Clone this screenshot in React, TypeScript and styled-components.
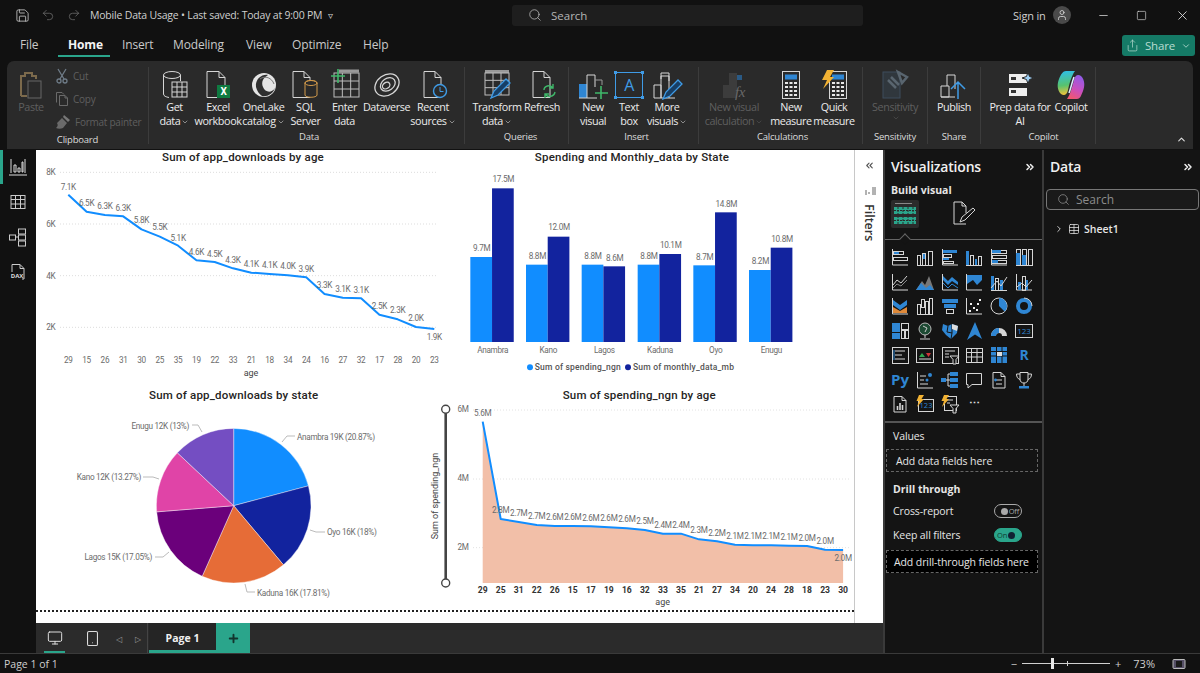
import React from 'react'
import styled, { createGlobalStyle } from 'styled-components'
import {
  ChevronDown,
  ChevronRight,
  ChevronsLeft,
  ChevronsRight,
  ChevronUp,
  Minus,
  Monitor,
  Plus,
  Redo2,
  Save,
  Search,
  Share,
  Smartphone,
  Square,
  Table,
  Undo2,
  User,
  X,
} from 'lucide-react'

const UI = '"Open Sans", "Noto Sans", "Liberation Sans", sans-serif'
const DIN = 'Roboto, "Liberation Sans", sans-serif'
const TEAL = '#2aa58b'
const BLUE = '#118DFF'
const NAVY = '#12239E'
const LINE = '#d6d6d6'
const ICON_BLUE = '#2f86d3'

const GlobalStyle = createGlobalStyle`
  html, body { margin: 0; padding: 0; background: #111; }
  body { font-family: ${UI}; color: #e6e6e6; overflow: hidden; }
`
const Page = styled.div`
  width: 1200px;
  height: 673px;
  display: flex;
  flex-direction: column;
  background: #111;
  overflow: hidden;
`
const TitleBar = styled.div`
  height: 30px;
  display: flex;
  align-items: center;
  padding-left: 15px;
  font-size: 10.5px;
  letter-spacing: -0.2px;
  color: #cfcfcf;
  & > * {
    flex-shrink: 0;
  }
`
const TitleIcon = styled.span<{ $w: number; $dim?: boolean }>`
  width: ${p => p.$w}px;
  display: flex;
  color: ${p => (p.$dim ? '#6f6f6f' : '#ccc')};
`
const DocName = styled.span`
  white-space: nowrap;
  width: 248px;
`
const DocCaret = styled.span`
  margin-left: 6px;
  font-size: 10px;
`
const SearchBar = styled.div`
  margin-left: 174px;
  width: 351px;
  height: 21px;
  background: #1e1e1e;
  border-radius: 3px;
  display: flex;
  align-items: center;
  gap: 9px;
  padding-left: 16px;
  box-sizing: border-box;
  font-size: 11.5px;
  letter-spacing: 0;
  color: #b5b5b5;
`
const SignIn = styled.span`
  margin-left: 150px;
  width: 40px;
  font-size: 11px;
  letter-spacing: -0.2px;
`
const Avatar = styled.span`
  width: 18px;
  height: 18px;
  border-radius: 50%;
  background: #4a4a4a;
  display: flex;
  align-items: center;
  justify-content: center;
  margin-right: 26px;
  color: #ddd;
`
const WinBtn = styled.span`
  width: 39px;
  display: flex;
  color: #ddd;
`
const MenuRow = styled.div`
  height: 31px;
  display: flex;
  align-items: center;
  padding-left: 20px;
  font-size: 12px;
  letter-spacing: -0.15px;
  color: #c9c9c9;
`
const MenuTab = styled.div<{ $w: number; $active?: boolean }>`
  width: ${p => p.$w}px;
  height: 100%;
  line-height: 29px;
  position: relative;
  font-weight: ${p => (p.$active ? 700 : 400)};
  color: ${p => (p.$active ? '#f4f4f4' : '#c9c9c9')};
  ${p =>
    p.$active &&
    `&::after {
      content: '';
      position: absolute;
      left: -10px;
      width: 52px;
      bottom: 4px;
      height: 2px;
      background: ${TEAL};
    }`}
`
const ShareBtn = styled.div`
  margin-left: auto;
  margin-right: 5px;
  width: 73px;
  height: 21px;
  background: #157a66;
  border-radius: 3px;
  display: flex;
  align-items: center;
  justify-content: center;
  gap: 6px;
  font-size: 11.5px;
  color: #b9dcd2;
`
const Ribbon = styled.div`
  height: 88px;
  margin: 0 7px;
  background: #2a2a2a;
  border-radius: 7px 7px 0 0;
  display: flex;
  position: relative;
  flex-shrink: 0;
`
const Group = styled.div<{ $w: number; $pad?: number; $last?: boolean }>`
  width: ${p => p.$w}px;
  box-sizing: border-box;
  border-right: ${p => (p.$last ? 'none' : '1px solid #3c3c3c')};
  margin: 6px 0 5px;
  padding-left: ${p => p.$pad ?? 0}px;
  display: flex;
  flex-direction: column;
`
const GroupRow = styled.div`
  display: flex;
  height: 65px;
  margin-top: 2px;
`
const GroupName = styled.div`
  text-align: center;
  font-size: 9.5px;
  letter-spacing: -0.2px;
  line-height: 14px;
  color: #dcdcdc;
`
const RibbonBtn = styled.div<{ $w: number; $off?: boolean }>`
  width: ${p => p.$w}px;
  display: flex;
  flex-direction: column;
  align-items: center;
  font-size: 10.8px;
  line-height: 14px;
  letter-spacing: -0.4px;
  white-space: nowrap;
  color: ${p => (p.$off ? '#5f5f5f' : '#ececec')};
`
const BtnIcon = styled.div`
  height: 31px;
  display: flex;
  align-items: flex-start;
  flex-shrink: 0;
`
const Caret = styled.span`
  display: inline-flex;
  vertical-align: -1px;
  margin-left: 1px;
`
const ClipStack = styled.div`
  display: flex;
  flex-direction: column;
  margin-top: -5px;
  font-size: 10px;
  letter-spacing: -0.25px;
  color: #5f5f5f;
`
const ClipRow = styled.div`
  height: 23px;
  display: flex;
  align-items: center;
  gap: 4px;
  white-space: nowrap;
`
const Collapse = styled.span`
  position: absolute;
  right: 6px;
  bottom: 4px;
  display: flex;
  color: #ddd;
`
const Body = styled.div`
  flex: 1;
  display: flex;
  margin-top: 1px;
  min-height: 0;
`
const Rail = styled.div`
  width: 36px;
  position: relative;
  display: flex;
  flex-direction: column;
  align-items: center;
  gap: 15px;
  padding-top: 7px;
  box-sizing: border-box;
  flex-shrink: 0;
`
const RailMark = styled.span`
  position: absolute;
  left: 0;
  top: 0;
  width: 3px;
  height: 34px;
  background: ${TEAL};
`
const Center = styled.div`
  width: 847px;
  display: flex;
  flex-direction: column;
`
const CanvasArea = styled.div`
  height: 473px;
  display: flex;
`
const Canvas = styled.div`
  width: 819px;
  background: #fff;
  border-right: 1px solid #c8c8c8;
  box-sizing: border-box;
  overflow: hidden;
`
const ChartRow = styled.div`
  display: flex;
  height: 230px;
`
const ChartSvg = styled.svg`
  display: block;
  flex-shrink: 0;
`
const PageEnd = styled.div`
  border-top: 2px dotted #222;
`
const ChartTitle = styled.text`
  font-family: ${DIN};
  font-size: 11.5px;
  font-weight: 500;
  letter-spacing: 0.2px;
  fill: #252423;
  text-anchor: middle;
  dominant-baseline: central;
`
const Tick = styled.text<{ $strong?: boolean; $anchor?: string }>`
  font-family: ${DIN};
  font-size: ${p => (p.$strong ? 8.6 : 8.2)}px;
  font-weight: ${p => (p.$strong ? 700 : 400)};
  letter-spacing: ${p => (p.$strong ? 0 : -0.3)}px;
  fill: ${p => (p.$strong ? '#333' : '#6c6c6c')};
  text-anchor: ${p => p.$anchor ?? 'middle'};
  dominant-baseline: central;
`
const AxisName = styled.text`
  font-family: ${DIN};
  font-size: 9px;
  fill: #444;
  text-anchor: middle;
  dominant-baseline: central;
`
const LegendText = styled.text`
  font-family: ${DIN};
  font-size: 8.5px;
  font-weight: 500;
  letter-spacing: 0.2px;
  fill: #555;
  dominant-baseline: central;
`
const Filters = styled.div`
  width: 28px;
  background: #fff;
  color: #252423;
  display: flex;
  flex-direction: column;
  align-items: center;
  padding-top: 10px;
  box-sizing: border-box;
`
const FilterMark = styled.span`
  display: flex;
  margin: 14px 0 0 2px;
`
const FiltersLabel = styled.div`
  writing-mode: vertical-rl;
  font-size: 12.5px;
  font-weight: 600;
  margin: 7px 0 0 1px;
  color: #333;
`
const PageBar = styled.div`
  flex: 1;
  background: #2b2b2b;
  display: flex;
`
const DeviceGroup = styled.div`
  width: 112px;
  display: flex;
  align-items: center;
  border-right: 1px solid #444;
  box-sizing: border-box;
  padding-left: 8px;
`
const DeviceBtn = styled.span<{ $on?: boolean; $w: number; $ml?: number }>`
  width: ${p => p.$w}px;
  margin-left: ${p => p.$ml ?? 0}px;
  display: flex;
  justify-content: center;
  position: relative;
  padding: 4px 0;
  color: #ddd;
  ${p =>
    p.$on &&
    `&::after {
      content: '';
      position: absolute;
      left: 0;
      right: 0;
      bottom: -3px;
      height: 2px;
      background: ${TEAL};
    }`}
`
const ArrowPair = styled.span`
  display: flex;
  margin-left: 7px;
`
const Arrow = styled.span`
  width: 19px;
  display: flex;
  justify-content: center;
  color: #999;
  font-size: 8px;
`
const PageTab = styled.div`
  width: 67px;
  margin-left: 1px;
  padding-top: 3px;
  box-sizing: border-box;
  border-bottom: 3px solid ${TEAL};
  background: #252525;
  display: flex;
  align-items: center;
  justify-content: center;
  font-size: 10.5px;
  font-weight: 700;
  color: #f0f0f0;
`
const AddTab = styled.div`
  width: 34px;
  background: ${TEAL};
  display: flex;
  align-items: center;
  justify-content: center;
  color: #12352d;
`
const Pane = styled.div<{ $w: number }>`
  width: ${p => p.$w}px;
  background: #141414;
  border-left: 2px solid #3a3a3a;
  box-sizing: border-box;
  display: flex;
  flex-direction: column;
  position: relative;
  flex-shrink: 0;
`
const PaneHead = styled.div<{ $pad: number }>`
  height: 33px;
  padding: 0 6px 0 ${p => p.$pad}px;
  display: flex;
  align-items: center;
  justify-content: space-between;
  font-size: 14px;
  font-weight: 600;
  letter-spacing: -0.2px;
  color: #f0f0f0;
`
const BuildLabel = styled.div`
  font-size: 10.5px;
  font-weight: 700;
  padding-left: 6px;
  line-height: 14px;
`
const BuildTabs = styled.div`
  height: 39px;
  margin-top: 3px;
  padding-left: 6px;
  display: flex;
  gap: 33px;
  border-bottom: 1px solid #666;
  position: relative;
`
const Notch = styled.span`
  position: absolute;
  left: 16px;
  bottom: -4px;
  width: 7px;
  height: 7px;
  background: #141414;
  border-left: 1px solid #666;
  border-top: 1px solid #666;
  transform: rotate(45deg);
`
const ActiveTab = styled.div`
  width: 28px;
  height: 28px;
  background: #2b2b2b;
  border-radius: 2px;
  display: flex;
  align-items: center;
  justify-content: center;
`
const VizGrid = styled.div`
  display: grid;
  grid-template-columns: repeat(6, 24.7px);
  grid-auto-rows: 24.5px;
  padding: 5px 0 0 3px;
  height: 176px;
  border-bottom: 2px solid #555;
  place-items: center;
`
const Well = styled.div`
  font-size: 10.5px;
  padding-left: 8px;
  margin-top: 6px;
  line-height: 14px;
  letter-spacing: -0.1px;
`
const Drop = styled.div<{ $dark?: boolean; $pad: number }>`
  margin: ${p => (p.$dark ? 3 : 6)}px 4px 0 1px;
  height: 23px;
  border: 1px dashed #666;
  box-sizing: border-box;
  background: ${p => (p.$dark ? '#000' : 'transparent')};
  display: flex;
  align-items: center;
  padding-left: ${p => p.$pad}px;
  font-size: 10.5px;
  letter-spacing: -0.1px;
  white-space: nowrap;
`
const DrillHead = styled.div`
  font-size: 10.5px;
  font-weight: 700;
  padding-left: 8px;
  margin: 10px 0 3px;
  line-height: 14px;
`
const ToggleRow = styled.div`
  height: 24px;
  display: flex;
  align-items: center;
  justify-content: space-between;
  padding: 0 20px 0 8px;
  font-size: 10.5px;
  letter-spacing: -0.1px;
`
const Toggle = styled.span<{ $on?: boolean }>`
  width: 28px;
  height: 14px;
  border-radius: 7px;
  box-sizing: border-box;
  border: 1px solid ${p => (p.$on ? TEAL : '#aaa')};
  background: ${p => (p.$on ? TEAL : 'transparent')};
  display: flex;
  flex-direction: ${p => (p.$on ? 'row-reverse' : 'row')};
  align-items: center;
  justify-content: flex-end;
  gap: 1px;
  padding: 0 2px;
  font-size: 7.5px;
  letter-spacing: -0.2px;
  color: ${p => (p.$on ? '#0e3b32' : '#aaa')};
  &::before {
    content: '';
    width: 7px;
    height: 7px;
    border-radius: 50%;
    background: ${p => (p.$on ? '#123' : '#aaa')};
    flex-shrink: 0;
  }
`
const SearchInput = styled.div`
  margin: 6px 1px 0 2px;
  height: 21px;
  border: 1px solid #777;
  border-radius: 4px;
  background: #1a1a1a;
  box-sizing: border-box;
  display: flex;
  align-items: center;
  gap: 6px;
  padding-left: 10px;
  font-size: 12px;
  color: #8c8c8c;
`
const TreeRow = styled.div`
  display: flex;
  align-items: center;
  gap: 4px;
  padding-left: 10px;
  margin-top: 12px;
  font-size: 10.5px;
  font-weight: 600;
`
const StatusBar = styled.div`
  height: 20px;
  border-top: 1px solid #3a3a3a;
  box-sizing: border-box;
  display: flex;
  align-items: center;
  padding-left: 4px;
  font-size: 10.5px;
  color: #cfcfcf;
  flex-shrink: 0;
`
const ZoomBox = styled.div`
  margin-left: auto;
  display: flex;
  align-items: center;
  padding-right: 14px;
  gap: 5px;
  font-size: 11px;
`
const ZoomTrack = styled.div`
  width: 88px;
  height: 1px;
  background: #d0d0d0;
  position: relative;
`
const ZoomThumb = styled.span`
  position: absolute;
  left: 29px;
  top: -5px;
  width: 3px;
  height: 11px;
  background: #e8e8e8;
`
const ZoomMark = styled.span`
  position: absolute;
  left: 45px;
  top: -2px;
  width: 1px;
  height: 5px;
  background: #d0d0d0;
`
const ZoomValue = styled.span`
  margin: 0 12px 0 7px;
`

// ribbon icons, all drawn on a 32 box
const Doc = ({ c = LINE }: { c?: string }) => (
  <path d="M7 2.5H18L24 8.5V28.5H7ZM18 2.5V8.5H24" stroke={c} fill="none" />
)
const Grid = ({ x, y, w, h, c = LINE, bg = '#2a2a2a' }: { x: number; y: number; w: number; h: number; c?: string; bg?: string }) => (
  <g stroke={c} fill={bg}>
    <rect x={x} y={y} width={w} height={h} />
    <path d={`M${x} ${y + h / 3}H${x + w}M${x} ${y + (2 * h) / 3}H${x + w}M${x + w / 3} ${y}V${y + h}M${x + (2 * w) / 3} ${y}V${y + h}`} fill="none" />
  </g>
)
const Pencil = ({ dx = 0, dy = 0 }: { dx?: number; dy?: number }) => (
  <g transform={`translate(${dx} ${dy})`}>
    <path d="M5 27L8 20L20 8L24 12L12 24Z" fill="#173f66" stroke="#3f9be6" strokeWidth="1.3" />
  </g>
)
const Bars = ({ c = LINE }: { c?: string }) => (
  <path d="M3 29V16H10V29M10 29V7H18V29M3 29H24" stroke={c} fill="none" />
)
const Calc = ({ x = 9 }: { x?: number }) => (
  <g transform={`translate(${x} 2)`}>
    <rect x="0.5" y="0.5" width="17" height="27" fill="none" stroke={LINE} />
    <rect x="3" y="3.5" width="12" height="5" fill="#2f86d3" />
    <path d="M3 12h3M7.5 12h3M12 12h3M3 16h3M7.5 16h3M12 16h3M3 20h3M7.5 20h3M12 20h3M3 24h3M7.5 24h3M12 24h3" stroke="#e8e8e8" strokeWidth="2.2" />
  </g>
)
const Ic = ({ w = 32, children }: { w?: number; children: React.ReactNode }) => (
  <svg width={w} height="32" viewBox={`0 0 ${w} 32`} fill="none">
    {children}
  </svg>
)

const PasteIcon = () => (
  <Ic>
    <path d="M6 27V7H10V4H17V7H21V10" stroke="#7c6a4c" strokeWidth="2" fill="none" />
    <path d="M6 27H12" stroke="#7c6a4c" strokeWidth="2" />
    <rect x="13" y="12" width="13" height="17" stroke="#666" fill="#2a2a2a" />
  </Ic>
)
const CutIcon = () => (
  <svg width="14" height="16" viewBox="0 0 14 16" fill="none" stroke="#6f7c88" strokeWidth="1.3">
    <path d="M3 1L9 11M11 1L5 11" />
    <circle cx="4" cy="13" r="2" />
    <circle cx="10" cy="13" r="2" />
  </svg>
)
const CopyIcon = () => (
  <svg width="14" height="16" viewBox="0 0 14 16" fill="none" stroke="#6a6a6a">
    <path d="M1.5 11.5V1.5H7L9 3.5" />
    <path d="M4.5 4.5H10L12.5 7V14.5H4.5ZM10 4.5V7H12.5" />
  </svg>
)
const PainterIcon = () => (
  <svg width="16" height="16" viewBox="0 0 16 16">
    <path d="M9 1L15 6L13 8L8 3Z" fill="#777" />
    <path d="M7 4L12 9L8 14C6 15 3 15 1 14C3 12 3 11 2 9Z" fill="#6a6a6a" />
  </svg>
)
const GetDataIcon = () => (
  <Ic>
    <ellipse cx="13" cy="6" rx="8.5" ry="3.5" stroke={LINE} />
    <path d="M4.5 6V25C4.5 27 7 28 10 28.5M21.5 6V12" stroke={LINE} />
    <Grid x={13} y={13} w={15} h={15} />
  </Ic>
)
const ExcelIcon = () => (
  <Ic>
    <path d="M5 2.5H17L23 8.5V28.5H5ZM17 2.5V8.5H23" stroke={LINE} />
    <rect x="15" y="16" width="13" height="13" fill="#0f7b41" />
    <text x="21.5" y="26" textAnchor="middle" fontSize="10" fontWeight="700" fill="#fff" fontFamily={DIN}>X</text>
  </Ic>
)
const OneLakeIcon = () => (
  <Ic>
    <circle cx="16" cy="16" r="12" fill="#e4e4e4" />
    <path d="M8 18C7 10 14 5 20 6C15 9 13 13 15 18C17 23 23 25 27 19C25 25 19 28 14 27C11 25 9 22 8 18Z" fill="#2f2f2f" />
    <path d="M12 10C17 6 24 9 26 15" stroke="#777" />
  </Ic>
)
const SqlIcon = () => (
  <Ic>
    <path d="M3 2.5H14L20 8.5V28.5H3ZM14 2.5V8.5H20" stroke={LINE} />
    <ellipse cx="21" cy="14" rx="6" ry="2.5" fill="#2a2a2a" stroke="#d29a4b" />
    <path d="M15 14V26C15 29 27 29 27 26V14" fill="#2a2a2a" stroke="#d29a4b" />
    <ellipse cx="21" cy="14" rx="6" ry="2.5" stroke="#d29a4b" />
  </Ic>
)
const EnterIcon = () => (
  <Ic>
    <path d="M10 2H30" stroke="#999" strokeWidth="3" />
    <Grid x={5} y={4} w={25} h={24} c="#bdbdbd" />
    <path d="M9 0V14M2 7H16" stroke="#3fb86a" strokeWidth="1.6" />
  </Ic>
)
const DataverseIcon = () => (
  <Ic>
    <g stroke={LINE} strokeWidth="1.3" transform="rotate(-35 16 16)">
      <ellipse cx="16" cy="16" rx="13" ry="10" />
      <ellipse cx="17" cy="16" rx="8" ry="6" />
      <ellipse cx="15" cy="16" rx="4" ry="3" />
    </g>
  </Ic>
)
const RecentIcon = () => (
  <Ic>
    <Doc />
    <circle cx="23" cy="22" r="6.5" fill="#2a2a2a" stroke="#3f9be6" strokeWidth="1.4" />
    <path d="M23 18V22.5H26.5" stroke="#3f9be6" />
  </Ic>
)
const TransformIcon = () => (
  <Ic>
    <path d="M4 2.5H28" stroke="#999" strokeWidth="3" />
    <Grid x={4} y={4} w={24} h={22} c="#bdbdbd" />
    <Pencil dx={5} dy={2} />
  </Ic>
)
const RefreshIcon = () => (
  <Ic>
    <Doc />
    <path d="M18 21C18 17 24 15 27 19M27 15V19H23M29 23C28 28 22 29 19 25M19 29V25H23" stroke="#3fb86a" strokeWidth="1.4" />
  </Ic>
)
const NewVisualIcon = () => (
  <Ic>
    <rect x="2" y="15" width="8" height="14" fill="#2f86d3" />
    <path d="M10 29V6H18V18M2 29H20" stroke={LINE} />
    <path d="M18 11H25V16" stroke="#999" />
    <path d="M24 17V30M18 24H31" stroke="#3fb86a" strokeWidth="1.6" />
  </Ic>
)
const TextBoxIcon = () => (
  <Ic>
    <rect x="2.5" y="3.5" width="27" height="25" stroke="#3f9be6" />
    <path d="M1 2h3v3h-3zM28 2h3v3h-3zM1 27h3v3h-3zM28 27h3v3h-3z" fill="#3f9be6" />
    <text x="16" y="22" textAnchor="middle" fontSize="16" fill="#3f9be6" fontFamily={UI}>A</text>
  </Ic>
)
const MoreIcon = () => (
  <Ic>
    <Bars />
    <path d="M18 12V4H10V10" stroke={LINE} />
    <Pencil dx={7} dy={3} />
  </Ic>
)
const CalcVisualIcon = () => (
  <Ic>
    <path d="M5 16H11V29H5ZM11 4H19V29H11Z" fill="#3c3c3c" />
    <path d="M19 6H24V11H19Z" fill="#2a5a85" />
    <text x="22" y="28" textAnchor="middle" fontSize="15" fontStyle="italic" fill="#686868" fontFamily="Liberation Serif">fx</text>
  </Ic>
)
const MeasureIcon = () => (
  <Ic>
    <Calc x={7} />
  </Ic>
)
const QuickIcon = () => (
  <Ic>
    <Calc x={11} />
    <path d="M9 1H16L12 8H16L5 20L9 11H4Z" fill="#f2b233" />
  </Ic>
)
const SensIcon = () => (
  <Ic>
    <rect x="4" y="3" width="17" height="26" stroke="#3c4c5c" fill="#30373d" />
    <path d="M9 11L17 19M12 8L20 16M19 3L28 8L23 14Z" stroke="#59656f" strokeWidth="2.5" />
  </Ic>
)
const PublishIcon = () => (
  <Ic>
    <path d="M3 28V17H11V28H3M9 17V6H17V20M3 28H17" stroke={LINE} />
    <path d="M20 30V13M13 20L20 13L27 20" stroke="#3f9be6" strokeWidth="1.5" />
  </Ic>
)
const PrepIcon = () => (
  <Ic>
    <rect x="5" y="5" width="18" height="9" fill="#eee" />
    <rect x="5" y="19" width="18" height="8" fill="#eee" />
    <rect x="7" y="8" width="5" height="3" fill="#333" />
    <rect x="7" y="21" width="5" height="3" fill="#333" />
    <path d="M24 3L25.5 7.5L30 9L25.5 10.5L24 15L22.5 10.5L18 9L22.5 7.5Z" fill="#9ed0f5" stroke="#2a2a2a" />
  </Ic>
)
const CopilotIcon = () => (
  <Ic>
    <defs>
      <linearGradient id="cpA" x1="0.3" y1="0" x2="0.4" y2="1">
        <stop offset="0" stopColor="#2fc0e8" />
        <stop offset="0.6" stopColor="#57c26e" />
        <stop offset="1" stopColor="#f5c23a" />
      </linearGradient>
      <linearGradient id="cpB" x1="0.7" y1="0" x2="0.3" y2="1">
        <stop offset="0" stopColor="#8f5be8" />
        <stop offset="0.55" stopColor="#c94fc0" />
        <stop offset="1" stopColor="#f0566f" />
      </linearGradient>
    </defs>
    <path d="M11 2H20C17 6 15 12 13 21C12 26 9 27 6 25C2 21 2 15 4 10C6 5 8 2 11 2Z" fill="url(#cpA)" />
    <path d="M22 30H12C15 26 17 19 19 11C20 6 23 5 26 7C30 11 30 17 28 22C26 27 25 30 22 30Z" fill="url(#cpB)" />
    <path d="M19 8C17 13 16 19 14 24" stroke="#dcecff" strokeWidth="1.5" />
  </Ic>
)

// visualization gallery, each on a 20 box
const O = ({ x, y, w, h }: { x: number; y: number; w: number; h: number }) => (
  <rect x={x + 0.5} y={y + 0.5} width={w} height={h} stroke={LINE} fill="none" />
)
const B = ({ x, y, w, h }: { x: number; y: number; w: number; h: number }) => (
  <rect x={x} y={y} width={w} height={h} fill={ICON_BLUE} />
)
const Base = () => <path d="M2.5 2V18H18" stroke={LINE} />
const Under = () => <path d="M2 18.5H18" stroke={LINE} />
const Label = ({ x, y, size, children, c = ICON_BLUE, weight = 600 }: { x: number; y: number; size: number; children: string; c?: string; weight?: number }) => (
  <text x={x} y={y} textAnchor="middle" fontSize={size} fontWeight={weight} fill={c} fontFamily={UI}>
    {children}
  </text>
)
const Bolt = () => <path d="M4 1H9L6.5 5H9L2 13L4 7H1.5Z" fill="#f2b233" />

const vizIcons: React.ReactNode[] = [
  <><Base /><B x={3} y={4} w={6} h={3} /><O x={3} y={4} w={10} h={3} /><O x={3} y={10} w={14} h={3} /></>,
  <><Under /><O x={2} y={8} w={3} h={10} /><B x={7} y={6} w={4} h={6} /><O x={7} y={6} w={3} h={12} /><O x={13} y={4} w={4} h={14} /></>,
  <><Base /><B x={3} y={3} w={14} h={3} /><O x={3} y={7} w={8} h={3} /><B x={3} y={11} w={6} h={2} /><O x={3} y={14} w={10} h={2} /></>,
  <><Under /><B x={2} y={4} w={3} h={14} /><O x={6} y={8} w={3} h={10} /><B x={11} y={12} w={2} h={6} /><O x={14} y={9} w={3} h={9} /></>,
  <><Base /><O x={3} y={3} w={14} h={3} /><B x={3} y={3} w={9} h={3} /><O x={3} y={8} w={14} h={3} /><O x={3} y={13} w={14} h={3} /><B x={3} y={13} w={6} h={3} /></>,
  <><Under /><O x={2} y={2} w={4} h={16} /><B x={2} y={6} w={4} h={12} /><O x={8} y={2} w={4} h={16} /><B x={8} y={8} w={4} h={10} /><O x={14} y={2} w={4} h={16} /></>,
  <><Base /><path d="M3 13L7 8L11 11L17 4" stroke={LINE} /><path d="M3 16L7 12L11 14L17 8" stroke="#888" /></>,
  <><path d="M1 18L7 9L10 13L14 4L19 18Z" fill="#777" /><path d="M1 18L6 11L11 16L15 13L19 18Z" fill={ICON_BLUE} /></>,
  <><Base /><path d="M3 4L8 9L12 5L18 10V13L12 9L8 13L3 8Z" fill={ICON_BLUE} /><path d="M3 11L8 16L12 12L18 16" stroke={ICON_BLUE} /></>,
  <><Base /><path d="M3 3H18V8L13 13L9 8L3 12Z" fill={ICON_BLUE} /></>,
  <><Under /><B x={2} y={4} w={3} h={14} /><O x={6} y={6} w={3} h={12} /><B x={11} y={8} w={3} h={10} /><path d="M2 16L8 9L12 14L18 5" stroke={LINE} /></>,
  <><Base /><B x={4} y={10} w={3} h={8} /><O x={8} y={4} w={3} h={14} /><B x={12} y={8} w={2} h={10} /><path d="M3 15L8 11L12 15L18 8" stroke={LINE} /></>,
  <><Base /><path d="M3 4L10 9L17 4V9L10 14L3 9Z" fill={ICON_BLUE} /><path d="M3 11L10 15L17 11V17H3Z" fill="#e08a3a" /></>,
  <><Under /><O x={2} y={8} w={3} h={10} /><O x={6} y={3} w={3} h={8} /><O x={10} y={5} w={3} h={13} /><O x={14} y={2} w={3} h={16} /></>,
  <><B x={2} y={3} w={16} h={4} /><B x={4} y={8} w={12} h={4} /><O x={6} y={13} w={7} h={4} /></>,
  <><Base /><path d="M5 15h2M9 12h2M13 8h2M6 8h2M12 14h2M15 4h2" stroke="#f0f0f0" strokeWidth="2" /></>,
  <><circle cx="10" cy="10" r="8" stroke={LINE} /><path d="M10 10V2A8 8 0 0 1 15.6 15.6Z" fill={ICON_BLUE} /></>,
  <><circle cx="10" cy="10" r="6" stroke={ICON_BLUE} strokeWidth="4" /><path d="M10 2A8 8 0 0 1 18 10" stroke="#cfcfcf" /></>,
  <><B x={2} y={2} w={8} h={9} /><B x={2} y={12} w={8} h={6} /><O x={11} y={2} w={7} h={6} /><O x={11} y={9} w={3} h={8} /><O x={15} y={9} w={3} h={8} /></>,
  <><circle cx="10" cy="8" r="6" stroke="#bbb" fill="#1d4a33" /><path d="M10 14V17M5 18H15M8 5L12 7L10 11" stroke="#ccc" /></>,
  <><path d="M3 3L8 5L12 3L18 5L17 12L11 18L6 14L2 9Z" fill={ICON_BLUE} /><path d="M8 5L7 11L12 12L11 18M12 3L12 12" stroke="#141414" /><path d="M12 3L18 5L17 10L12 8Z" fill="#ddd" /></>,
  <><path d="M11 1L18 18L11 13.5L3 19Z" fill={ICON_BLUE} /></>,
  <><path d="M2 15A8 8 0 0 1 18 15H13A3 3 0 0 0 7 15Z" fill={LINE} /><path d="M2 15A8 8 0 0 1 10 7V12A3 3 0 0 0 7 15Z" fill={ICON_BLUE} /></>,
  <><O x={1} y={3} w={17} h={13} /><Label x={10} y={13} size={8} weight={400}>123</Label></>,
  <><O x={2} y={2} w={16} h={16} /><path d="M5 6H15M5 10H12M5 14H15" stroke={LINE} /><path d="M4 5V15" stroke={ICON_BLUE} /></>,
  <><O x={1} y={3} w={17} h={14} /><path d="M4 12L7 8L10 12Z" fill="#2fa84f" /><path d="M11 8L16 8L13.5 12Z" fill="#d13438" /><path d="M4 14H16" stroke={LINE} /></>,
  <><O x={2} y={2} w={16} h={16} /><path d="M5 6H15M5 9H9M5 12H9" stroke={LINE} /><path d="M10 11H19L16 14.5V19H13V14.5Z" fill="#141414" stroke={LINE} /></>,
  <><O x={2} y={3} w={16} h={14} /><path d="M2 7.5H18M2 12H18M7.5 3V17M13 3V17" stroke={LINE} /></>,
  <><rect x="2" y="2" width="16" height="16" fill={ICON_BLUE} /><path d="M2 6.5H18M2 11H18M7.5 2V18M13 2V18" stroke="#141414" /><rect x="8" y="7" width="5" height="4" fill="#ddd" /></>,
  <Label x={10} y={15} size={14} weight={700}>R</Label>,
  <Label x={10} y={15} size={15} weight={700}>Py</Label>,
  <><Base /><path d="M5 6H11M5 10H9M5 14H13" stroke={LINE} /><circle cx="15" cy="5" r="2" fill={ICON_BLUE} /><circle cx="12" cy="10" r="1.5" fill={ICON_BLUE} /></>,
  <><B x={1} y={8} w={5} h={4} /><B x={10} y={2} w={8} h={4} /><B x={10} y={8} w={8} h={4} /><B x={10} y={14} w={8} h={4} /><path d="M6 10H10M8 4V16H10M8 4H10" stroke={LINE} /></>,
  <><path d="M2.5 3.5H17.5V14.5H8L4 18V14.5H2.5Z" stroke={LINE} /></>,
  <><path d="M4 2.5H12L16 6.5V18H4ZM12 2.5V6.5H16" stroke={LINE} /><path d="M7 10H13M7 14H13" stroke={LINE} /><circle cx="6.5" cy="10" r="1.4" fill={ICON_BLUE} /></>,
  <><path d="M6 2.5H14V9C14 12 12 13 10 13C8 13 6 12 6 9Z" stroke={LINE} /><path d="M6 4H2.5C2.5 7 4 9 6 9.5M14 4H17.5C17.5 7 16 9 14 9.5M10 13V16" stroke={LINE} /><rect x="5" y="16" width="10" height="2.5" fill={ICON_BLUE} /></>,
  <><path d="M4 2.5H12L16 6.5V18H4ZM12 2.5V6.5H16" stroke={LINE} /><path d="M7.5 16V12M10 16V9M12.5 16V11" stroke={LINE} strokeWidth="1.6" /></>,
  <><O x={3} y={5} w={15} h={12} /><Label x={11} y={14} size={7.5} weight={400}>123</Label><Bolt /></>,
  <><O x={4} y={2} w={12} h={14} /><path d="M7 6H13M7 9H10" stroke={LINE} /><path d="M10 11H19L16 14.5V19H13V14.5Z" fill="#141414" stroke={LINE} /><Bolt /></>,
  <Label x={10} y={13} size={11} c="#ddd">⋯</Label>,
]

// chart data, read off the picture in page coordinates
const ages1 = '29 15 26 31 30 25 35 19 22 33 21 18 34 24 16 27 32 17 28 20 23'.split(' ')
const line1: [string, number, number][] = [
  ['7.1K', 134, 110], ['6.5K', 185, 158], ['6.3K', 195, 168], ['6.3K', 199, 173], ['5.8K', 238, 211], ['5.5K', 260, 232],
  ['5.1K', 287, 264], ['4.6K', 331, 306], ['4.5K', 336, 311], ['4.3K', 355, 330], ['4.1K', 368, 341], ['4.1K', 372, 346],
  ['4.0K', 376, 349], ['3.9K', 382, 356], ['3.3K', 432, 406], ['3.1K', 443, 417], ['3.1K', 445, 420], ['2.5K', 494, 467],
  ['2.3K', 508, 480], ['2.0K', 531, 504], ['1.9K', 537, 562],
]
const ages2 = '29 25 31 22 26 15 17 19 16 32 33 35 21 27 34 20 24 28 18 23 30'.split(' ')
const line2: [string, number, number][] = [
  ['5.6M', 125, 100], ['2.8M', 417, 391], ['2.7M', 426, 400], ['2.7M', 435, 408], ['2.6M', 438, 410], ['2.6M', 438, 410],
  ['2.6M', 439, 413], ['2.6M', 442, 415], ['2.6M', 445, 418], ['2.5M', 450, 423], ['2.4M', 461, 435], ['2.4M', 461, 434],
  ['2.3M', 478, 451], ['2.2M', 484, 458], ['2.1M', 494, 468], ['2.1M', 496, 468], ['2.1M', 496, 468], ['2.1M', 497, 470],
  ['2.0M', 498, 473], ['2.0M', 509, 482], ['2.0M', 510, 534],
]
const states: [string, string, number, number, string, number, number, number, number][] = [
  ['Anambra', '9.7M', 321, 294, '17.5M', 115, 87, 61, 128],
  ['Kano', '8.8M', 344, 318, '12.0M', 260, 232, 228, 295],
  ['Lagos', '8.8M', 344, 318, '8.6M', 349, 323, 395, 463],
  ['Kaduna', '8.8M', 344, 318, '10.1M', 312, 285, 563, 630],
  ['Oyo', '8.7M', 346, 320, '14.8M', 187, 161, 730, 797],
  ['Enugu', '8.2M', 360, 333, '10.8M', 293, 267, 897, 964],
]
const slices: [number, string][] = [
  [20.87, BLUE], [18, NAVY], [17.81, '#E66C37'], [17.05, '#6B007B'], [13.27, '#E044A7'], [13, '#744EC2'],
]
const pieLabels: [string, number, number, string, string][] = [
  ['Enugu 12K (13%)', 189, 425.5, 'end', '192,425 198,425 202,432'],
  ['Anambra 19K (20.87%)', 297, 437, 'start', '282,442 287,436 295,436'],
  ['Kano 12K (13.27%)', 141, 477, 'end', '143,477 153,477 159,479'],
  ['Oyo 16K (18%)', 327, 532, 'start', '310,530 316,532 325,532'],
  ['Lagos 15K (17.05%)', 152, 557, 'end', '155,557 163,557 169,552'],
  ['Kaduna 16K (17.81%)', 257, 593, 'start', '245,584 247,592 255,592'],
]

function slicePaths() {
  const cx = 233.7
  const cy = 505.7
  const r = 77.3
  let at = 0
  return slices.map(([pct, fill]) => {
    const a0 = (at / 100) * Math.PI * 2
    at += pct
    const a1 = (at / 100) * Math.PI * 2
    const d = `M${cx} ${cy}L${cx + r * Math.sin(a0)} ${cy - r * Math.cos(a0)}A${r} ${r} 0 0 1 ${cx + r * Math.sin(a1)} ${cy - r * Math.cos(a1)}Z`
    return { d, fill }
  })
}

const Frame = ({ x, y, w, h, children }: { x: number; y: number; w: number; h: number; children: React.ReactNode }) => (
  <ChartSvg width={w} height={h} viewBox={`${x} ${y} ${w} ${h}`}>
    {children}
  </ChartSvg>
)

const DownloadsByAge = () => {
  const px = (i: number) => 68.3 + i * 18.3
  const py = (z: number) => 150 + z / 3
  return (
    <Frame x={36} y={150} w={414} h={230}>
      <ChartTitle x={243} y={157}>Sum of app_downloads by age</ChartTitle>
      {[['8K', 67], ['6K', 222], ['4K', 377], ['2K', 532]].map(([t, z]) => (
        <g key={t}>
          <Tick x={50.7} y={py(+z)}>{t}</Tick>
          <path d={`M60 ${py(+z)}H438`} stroke="#ddd" strokeDasharray="1 2" />
        </g>
      ))}
      <polyline points={line1.map((p, i) => `${px(i)},${py(p[1])}`).join(' ')} fill="none" stroke={BLUE} strokeWidth="2" strokeLinejoin="round" />
      {line1.map((p, i) => (
        <Tick key={i} x={px(i)} y={py(p[2])}>{p[0]}</Tick>
      ))}
      {ages1.map((a, i) => (
        <Tick key={i} x={px(i)} y={360}>{a}</Tick>
      ))}
      <AxisName x={251} y={372.7}>age</AxisName>
    </Frame>
  )
}

const SpendingByState = () => {
  const sx = (z: number) => 450 + z / 3
  const sy = (z: number) => 150 + z / 3
  const bw = 21.7
  return (
    <Frame x={450} y={150} w={404} h={230}>
      <ChartTitle x={632} y={157}>Spending and Monthly_data by State</ChartTitle>
      {states.map(([name, l1, t1, y1, l2, t2, y2, x1, x2]) => (
        <g key={name}>
          <rect x={sx(x1)} y={sy(t1)} width={bw} height={342 - sy(t1)} fill={BLUE} />
          <rect x={sx(x1) + bw} y={sy(t2)} width={bw} height={342 - sy(t2)} fill={NAVY} />
          <Tick x={sx(x1) + bw / 2 + 0.5} y={sy(y1)}>{l1}</Tick>
          <Tick x={sx(x1) + bw * 1.5 + 0.5} y={sy(y2)}>{l2}</Tick>
          <Tick x={sx(x2)} y={350}>{name}</Tick>
        </g>
      ))}
      <circle cx={530} cy={367.3} r={3} fill={BLUE} />
      <LegendText x={534.7} y={367.3}>Sum of spending_ngn</LegendText>
      <circle cx={628} cy={367.3} r={3} fill={NAVY} />
      <LegendText x={633} y={367.3}>Sum of monthly_data_mb</LegendText>
    </Frame>
  )
}

const DownloadsByState = () => (
  <Frame x={36} y={380} w={394} h={230}>
    <ChartTitle x={233.7} y={394.7}>Sum of app_downloads by state</ChartTitle>
    {slicePaths().map(s => (
      <path key={s.fill} d={s.d} fill={s.fill} stroke="#fff" strokeWidth="0.4" />
    ))}
    {pieLabels.map(([t, x, y, anchor, pts]) => (
      <g key={t}>
        <polyline points={pts} fill="none" stroke="#bbb" />
        <Tick x={x} y={y} $anchor={anchor}>{t}</Tick>
      </g>
    ))}
  </Frame>
)

const SpendingByAge = () => {
  const px = (i: number) => 482.7 + i * 18.02
  const py = (z: number) => 380 + z / 3
  const pts = line2.map((p, i) => `${px(i)},${py(p[1])}`).join(' ')
  return (
    <Frame x={430} y={380} w={424} h={230}>
      <ChartTitle x={639.3} y={394.7}>Sum of spending_ngn by age</ChartTitle>
      {[['6M', 90], ['4M', 297], ['2M', 503]].map(([t, z]) => (
        <g key={t}>
          <Tick x={463} y={py(+z - 2)}>{t}</Tick>
          <path d={`M473 ${py(+z)}H850`} stroke="#e2e2e2" strokeDasharray="1 2" />
        </g>
      ))}
      <polygon points={`${px(0)},583 ${pts} ${px(20)},583`} fill="#F2BFA8" />
      <polyline points={pts} fill="none" stroke={BLUE} strokeWidth="2" strokeLinejoin="round" />
      {line2.map((p, i) => (
        <Tick key={i} x={px(i)} y={py(p[2])}>{p[0]}</Tick>
      ))}
      {ages2.map((a, i) => (
        <Tick key={i} $strong x={px(i)} y={590}>{a}</Tick>
      ))}
      <AxisName x={662.7} y={602.3}>age</AxisName>
      <path d="M445.7 413V579" stroke="#444" strokeWidth="2.6" />
      <circle cx={445.7} cy={409.3} r={4} fill="#fff" stroke="#444" strokeWidth="1.4" />
      <circle cx={445.7} cy={583} r={4} fill="#fff" stroke="#444" strokeWidth="1.4" />
      <AxisName x={434.7} y={496} transform="rotate(-90 434.7 496)">Sum of spending_ngn</AxisName>
    </Frame>
  )
}

const More = () => (
  <Caret>
    <ChevronDown size={8} strokeWidth={1.5} />
  </Caret>
)

const App: React.FC = () => (
  <Page>
    <GlobalStyle />
    <TitleBar>
      <TitleIcon $w={26}><Save size={15} strokeWidth={1.3} /></TitleIcon>
      <TitleIcon $w={26} $dim><Undo2 size={14} strokeWidth={1.3} /></TitleIcon>
      <TitleIcon $w={23} $dim><Redo2 size={14} strokeWidth={1.3} /></TitleIcon>
      <DocName>Mobile Data Usage • Last saved: Today at 9:00 PM<DocCaret>▿</DocCaret></DocName>
      <SearchBar><Search size={14} strokeWidth={1.4} />Search</SearchBar>
      <SignIn>Sign in</SignIn>
      <Avatar><User size={12} strokeWidth={1.6} /></Avatar>
      <WinBtn><Minus size={13} strokeWidth={1.4} /></WinBtn>
      <WinBtn><Square size={11} strokeWidth={1.4} /></WinBtn>
      <WinBtn><X size={15} strokeWidth={1.4} /></WinBtn>
    </TitleBar>
    <MenuRow>
      <MenuTab $w={48}>File</MenuTab>
      <MenuTab $w={54} $active>Home</MenuTab>
      <MenuTab $w={51}>Insert</MenuTab>
      <MenuTab $w={73}>Modeling</MenuTab>
      <MenuTab $w={46}>View</MenuTab>
      <MenuTab $w={71}>Optimize</MenuTab>
      <MenuTab $w={40}>Help</MenuTab>
      <ShareBtn><Share size={13} strokeWidth={1.3} />Share<ChevronDown size={10} /></ShareBtn>
    </MenuRow>
    <Ribbon>
      <Group $w={142}>
        <GroupRow>
          <RibbonBtn $w={48} $off><BtnIcon><PasteIcon /></BtnIcon>Paste</RibbonBtn>
          <ClipStack>
            <ClipRow><CutIcon />Cut</ClipRow>
            <ClipRow><CopyIcon />Copy</ClipRow>
            <ClipRow><PainterIcon />Format painter</ClipRow>
          </ClipStack>
        </GroupRow>
        <GroupName>Clipboard</GroupName>
      </Group>
      <Group $w={316} $pad={5}>
        <GroupRow>
          <RibbonBtn $w={41}><BtnIcon><GetDataIcon /></BtnIcon>Get<span>data<More /></span></RibbonBtn>
          <RibbonBtn $w={46}><BtnIcon><ExcelIcon /></BtnIcon>Excel<span>workbook</span></RibbonBtn>
          <RibbonBtn $w={45}><BtnIcon><OneLakeIcon /></BtnIcon>OneLake<span>catalog<More /></span></RibbonBtn>
          <RibbonBtn $w={39}><BtnIcon><SqlIcon /></BtnIcon>SQL<span>Server</span></RibbonBtn>
          <RibbonBtn $w={39}><BtnIcon><EnterIcon /></BtnIcon>Enter<span>data</span></RibbonBtn>
          <RibbonBtn $w={45}><BtnIcon><DataverseIcon /></BtnIcon>Dataverse</RibbonBtn>
          <RibbonBtn $w={48}><BtnIcon><RecentIcon /></BtnIcon>Recent<span>sources<More /></span></RibbonBtn>
        </GroupRow>
        <GroupName>Data</GroupName>
      </Group>
      <Group $w={104} $pad={8}>
        <GroupRow>
          <RibbonBtn $w={48}><BtnIcon><TransformIcon /></BtnIcon>Transform<span>data<More /></span></RibbonBtn>
          <RibbonBtn $w={42}><BtnIcon><RefreshIcon /></BtnIcon>Refresh</RibbonBtn>
        </GroupRow>
        <GroupName>Queries</GroupName>
      </Group>
      <Group $w={130} $pad={6}>
        <GroupRow>
          <RibbonBtn $w={36}><BtnIcon><NewVisualIcon /></BtnIcon>New<span>visual</span></RibbonBtn>
          <RibbonBtn $w={36}><BtnIcon><TextBoxIcon /></BtnIcon>Text<span>box</span></RibbonBtn>
          <RibbonBtn $w={40}><BtnIcon><MoreIcon /></BtnIcon>More<span>visuals<More /></span></RibbonBtn>
        </GroupRow>
        <GroupName>Insert</GroupName>
      </Group>
      <Group $w={164} $pad={4}>
        <GroupRow>
          <RibbonBtn $w={62} $off><BtnIcon><CalcVisualIcon /></BtnIcon>New visual<span>calculation<More /></span></RibbonBtn>
          <RibbonBtn $w={52}><BtnIcon><MeasureIcon /></BtnIcon>New<span>measure</span></RibbonBtn>
          <RibbonBtn $w={34}><BtnIcon><QuickIcon /></BtnIcon>Quick<span>measure</span></RibbonBtn>
        </GroupRow>
        <GroupName>Calculations</GroupName>
      </Group>
      <Group $w={65}>
        <GroupRow>
          <RibbonBtn $w={64} $off><BtnIcon><SensIcon /></BtnIcon>Sensitivity<More /></RibbonBtn>
        </GroupRow>
        <GroupName>Sensitivity</GroupName>
      </Group>
      <Group $w={53}>
        <GroupRow>
          <RibbonBtn $w={52}><BtnIcon><PublishIcon /></BtnIcon>Publish</RibbonBtn>
        </GroupRow>
        <GroupName>Share</GroupName>
      </Group>
      <Group $w={115} $pad={11}>
        <GroupRow>
          <RibbonBtn $w={56}><BtnIcon><PrepIcon /></BtnIcon>Prep data for<span>AI</span></RibbonBtn>
          <RibbonBtn $w={46}><BtnIcon><CopilotIcon /></BtnIcon>Copilot</RibbonBtn>
        </GroupRow>
        <GroupName>Copilot</GroupName>
      </Group>
      <Collapse><ChevronUp size={11} strokeWidth={2.5} /></Collapse>
    </Ribbon>
    <Body>
      <Rail>
        <RailMark />
        <svg width="20" height="20" viewBox="0 0 20 20" fill="none" stroke="#ddd">
          <path d="M3 2V16M17 2V16M1 18H19M6 8V15H8V8ZM10 11V15H12V11ZM14 5V15H15V5Z" />
        </svg>
        <svg width="20" height="20" viewBox="0 0 20 20" fill="none" stroke="#ccc">
          <rect x="3" y="3.5" width="14" height="13" />
          <path d="M3 7.5H17M3 12H17M7.5 3.5V16.5M12.5 3.5V16.5" />
        </svg>
        <svg width="20" height="20" viewBox="0 0 20 20" fill="none" stroke="#ccc">
          <rect x="1.5" y="8" width="6" height="5" />
          <rect x="10.5" y="2" width="7" height="5" />
          <rect x="10.5" y="8" width="7" height="5" />
          <rect x="10.5" y="14" width="7" height="5" />
          <path d="M7.5 10H10.5" />
        </svg>
        <svg width="20" height="20" viewBox="0 0 20 20" fill="none" stroke="#ccc">
          <path d="M4 10V2.5H12L16 6.5V17H14M12 2.5V6.5H16" />
          <text x="9" y="16" fontSize="6" fontWeight="700" fill="#ddd" stroke="none" textAnchor="middle" fontFamily={UI}>DAX</text>
        </svg>
      </Rail>
      <Center>
        <CanvasArea>
          <Canvas>
            <ChartRow>
              <DownloadsByAge />
              <SpendingByState />
            </ChartRow>
            <ChartRow>
              <DownloadsByState />
              <SpendingByAge />
            </ChartRow>
            <PageEnd />
          </Canvas>
          <Filters>
            <ChevronsLeft size={11} strokeWidth={2.5} color="#555" />
            <FilterMark>
              <svg width="12" height="12" viewBox="0 0 12 12" fill="none" stroke="#666">
                <path d="M2 5V10M5 7V9M9 2V10M11 2V10" />
              </svg>
            </FilterMark>
            <FiltersLabel>Filters</FiltersLabel>
          </Filters>
        </CanvasArea>
        <PageBar>
          <DeviceGroup>
            <DeviceBtn $on $w={22}><Monitor size={16} strokeWidth={1.5} /></DeviceBtn>
            <DeviceBtn $w={20} $ml={17}><Smartphone size={17} strokeWidth={1.5} /></DeviceBtn>
            <ArrowPair>
              <Arrow>◁</Arrow>
              <Arrow>▷</Arrow>
            </ArrowPair>
          </DeviceGroup>
          <PageTab>Page 1</PageTab>
          <AddTab><Plus size={13} strokeWidth={3.5} /></AddTab>
        </PageBar>
      </Center>
      <Pane $w={159}>
        <PaneHead $pad={6}>Visualizations<ChevronsRight size={12} strokeWidth={3} /></PaneHead>
        <BuildLabel>Build visual</BuildLabel>
        <BuildTabs>
          <ActiveTab>
            <svg width="22" height="24" viewBox="0 0 22 24" fill="none">
              <path d="M1 1.5H18" stroke="#888" />
              <rect x="0" y="5" width="22" height="7" fill={TEAL} />
              <rect x="0" y="15" width="22" height="7" fill={TEAL} />
              <path d="M0 8.5H22M0 18.5H22M4 5V22M9 5V22M14 5V22M19 5V22" stroke="#2b2b2b" strokeDasharray="2 1" />
            </svg>
          </ActiveTab>
          <svg width="24" height="26" viewBox="0 0 24 26" fill="none" stroke={LINE}>
            <path d="M2 2H10L14 6V13M10 2V6H14M14 24H2V2" />
            <path d="M8 22L10 17L21 8L23 10L13 20Z" />
          </svg>
          <Notch />
        </BuildTabs>
        <VizGrid>
          {vizIcons.map((icon, i) => (
            <svg key={i} width="20" height="20" viewBox="0 0 20 20" fill="none">
              {icon}
            </svg>
          ))}
        </VizGrid>
        <Well>Values</Well>
        <Drop $pad={9}>Add data fields here</Drop>
        <DrillHead>Drill through</DrillHead>
        <ToggleRow>Cross-report<Toggle>Off</Toggle></ToggleRow>
        <ToggleRow>Keep all filters<Toggle $on>On</Toggle></ToggleRow>
        <Drop $dark $pad={7}>Add drill-through fields here</Drop>
      </Pane>
      <Pane $w={158}>
        <PaneHead $pad={6}>Data<ChevronsRight size={12} strokeWidth={3} /></PaneHead>
        <SearchInput><Search size={13} strokeWidth={1.4} />Search</SearchInput>
        <TreeRow>
          <ChevronRight size={10} strokeWidth={2} />
          <Table size={12} strokeWidth={1.5} />
          Sheet1
        </TreeRow>
      </Pane>
    </Body>
    <StatusBar>
      Page 1 of 1
      <ZoomBox>
        −
        <ZoomTrack><ZoomThumb /><ZoomMark /></ZoomTrack>
        +
        <ZoomValue>73%</ZoomValue>
        <svg width="14" height="12" viewBox="0 0 14 12" fill="none">
          <rect x="1" y="1.5" width="12" height="9" rx="1" stroke="#bbb" fill="#554f66" />
          <rect x="4" y="3" width="6" height="6" fill="#1a1a1a" />
        </svg>
      </ZoomBox>
    </StatusBar>
  </Page>
)

export default App
